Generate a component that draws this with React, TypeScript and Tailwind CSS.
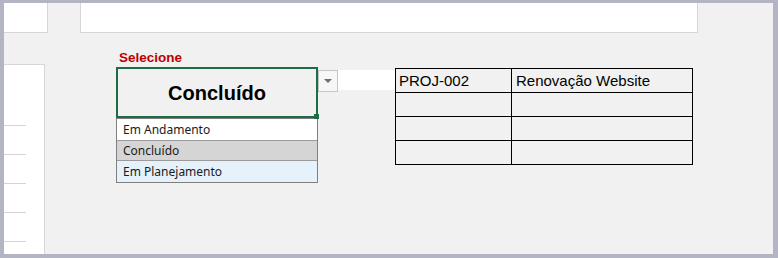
import React from 'react';

const options = ['Em Andamento', 'Concluído', 'Em Planejamento'];

export default function App() {
  return (
    <div className="w-[778px] h-[258px] bg-[#b4b5c4] pt-[3px] pl-[4px] pr-[5px] pb-[4px]">
      <div className="w-full h-full bg-[#f1f1f1] flex flex-col overflow-hidden">
        {/* top strip */}
        <div className="h-[30px] flex shrink-0">
          <div className="w-[44px] bg-white border-r border-b border-[#d6d6d6]" />
          <div className="ml-[32px] w-[618px] bg-white border-x border-b border-[#d6d6d6]" />
        </div>

        <div className="flex flex-1">
          {/* left sheet */}
          <div className="mt-[31px] w-[41px] bg-white border-t border-r border-[#d6d6d6] flex flex-col pt-[60px] gap-[28px]">
            {[0, 1, 2, 3, 4].map((i) => (
              <div key={i} className="h-px w-[22px] bg-[#d4d4d4]" />
            ))}
          </div>

          {/* content */}
          <div className="ml-[71px] pt-[16px] flex items-start">
            <div className="w-[202px] flex flex-col">
              <div className="h-[18px] text-[13.5px] font-bold text-[#c00000] leading-[18px] pl-[3px] font-['Liberation_Sans',sans-serif]">
                Selecione
              </div>
              <div className="relative h-[51px] border-2 border-[#1f6b43] flex items-center justify-center">
                <span className="text-[20px] font-bold text-black font-['Liberation_Sans',sans-serif]">Concluído</span>
                <div className="absolute -right-[3px] -bottom-[3px] w-[5px] h-[5px] bg-[#1f6b43]" />
              </div>
              <div className="border border-[#7f7f7f] bg-white font-['Noto_Sans',sans-serif] text-[12px] text-[#1a1a1a]">
                {options.map((o) => (
                  <div
                    key={o}
                    className={
                      o === 'Concluído'
                        ? 'h-[21px] leading-[19px] pl-[6px] bg-[#d5d5d5] border-y border-[#9a9a9a]'
                        : o === 'Em Planejamento'
                        ? 'h-[21px] leading-[21px] pl-[6px] bg-[#e5f1fb]'
                        : 'h-[21px] leading-[21px] pl-[6px] bg-white'
                    }
                  >
                    {o}
                  </div>
                ))}
              </div>
            </div>

            <div className="mt-[19px] flex items-start">
              <div className="mt-[2px] w-[20px] h-[22px] bg-[#f7f7f7] border border-[#c6c6c6] flex items-center justify-center">
                <div className="w-0 h-0 border-l-[4px] border-r-[4px] border-t-[4px] border-l-transparent border-r-transparent border-t-[#707070]" />
              </div>
              <div className="mt-[2px] w-[57px] h-[20px] bg-white" />
              <div className="border-l border-t border-black grid grid-cols-[116px_181px] font-['Liberation_Sans',sans-serif] text-[15px] text-black">
                <div className="h-[24px] border-r border-b border-black pl-[3px] leading-[23px]">PROJ-002</div>
                <div className="h-[24px] border-r border-b border-black pl-[4px] leading-[23px]">Renovação Website</div>
                {[0, 1, 2, 3, 4, 5].map((i) => (
                  <div key={i} className="h-[24px] border-r border-b border-black" />
                ))}
              </div>
            </div>
          </div>
        </div>
      </div>
    </div>
  );
}
